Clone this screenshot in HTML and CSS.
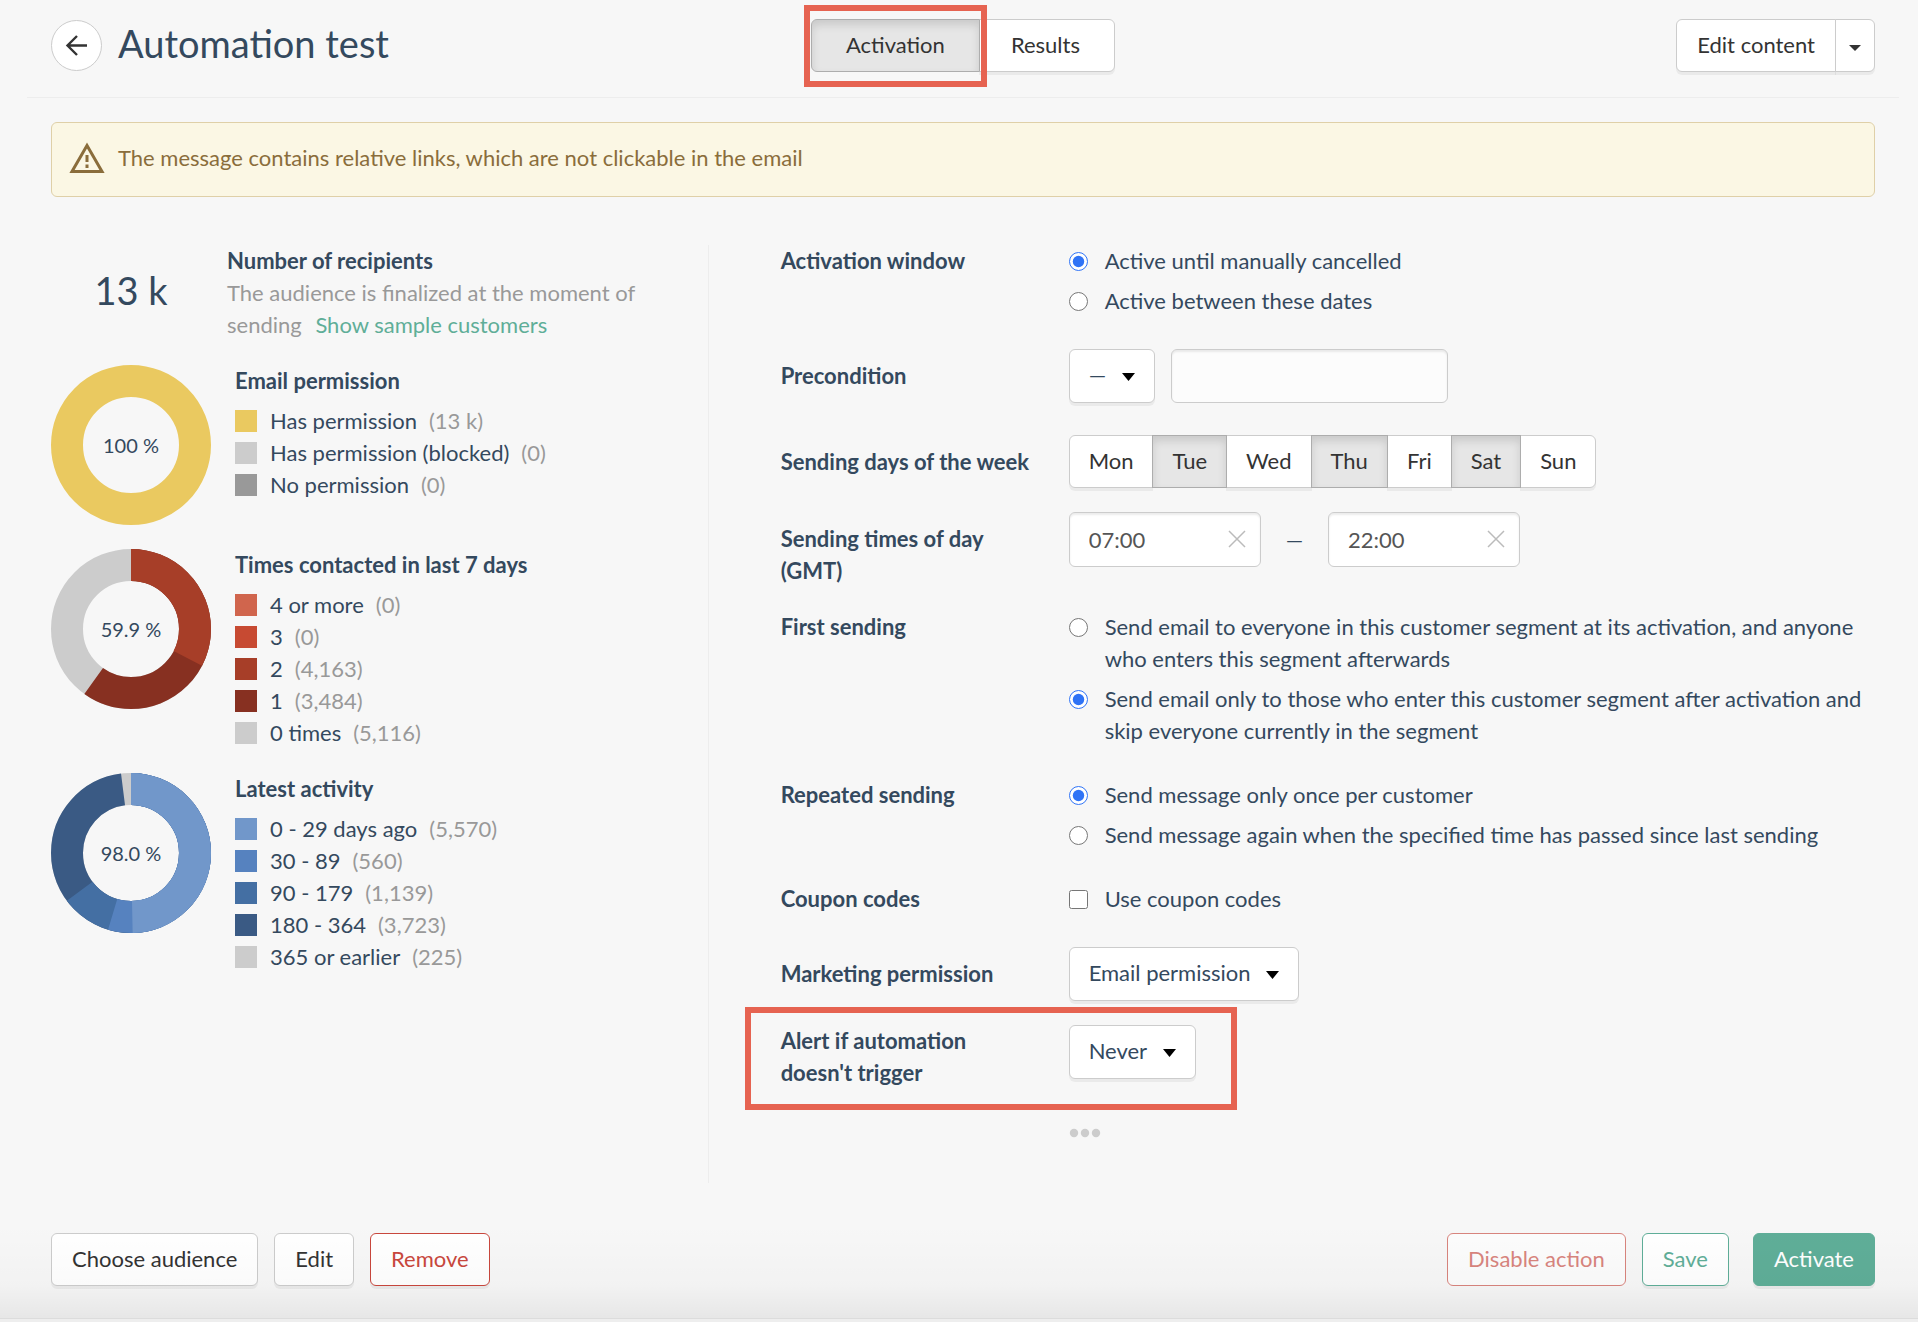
FILE: index.html
```html
<!DOCTYPE html>
<html lang="en">
<head>
<meta charset="utf-8">
<meta name="viewport" content="width=device-width, initial-scale=1">
<title>Automation test</title>
<link rel="stylesheet" href="styles.css">
</head>
<body>
<div class="page">
  <header class="header">
    <div class="header-title">
      <button class="back" type="button" aria-label="Back">
        <svg width="24" height="24" viewBox="0 0 24 24" fill="none" stroke="currentColor" stroke-width="2.4"><path d="M22 11.500H3M12 2L2.500 11.500L12 21"/></svg>
      </button>
      <h1>Automation test</h1>
    </div>
    <nav class="button-group">
      <span class="highlight-anchor"><button class="btn is-pressed tab" type="button" aria-pressed="true">Activation</button><span class="highlight highlight-tab"></span></span>
      <button class="btn tab-results" type="button">Results</button>
    </nav>
    <div class="button-group header-actions">
      <button class="btn" type="button">Edit content</button>
      <button class="btn btn-caret" type="button" aria-label="More content actions"><svg width="12" height="6" viewBox="0 0 12 6"><path d="M0 0h12L6 6z" fill="currentColor"/></svg></button>
    </div>
  </header>

  <main class="main">
    <div class="notice" role="alert">
      <svg width="36" height="32" viewBox="0 0 36 32" fill="none" stroke="currentColor"><path d="M18 3.500L33 29.500H3z" stroke-width="3"/><path d="M18 13v7M18 22.500v3.500" stroke-width="3"/></svg>
      <span>The message contains relative links, which are not clickable in the email</span>
    </div>

    <div class="columns">
      <section class="audience">
        <div class="recipients">
          <div class="recipients-count">13 k</div>
          <div class="recipients-text">
            <h2>Number of recipients</h2>
            <p>The audience is finalized at the moment of sending <a href="#">Show sample customers</a></p>
          </div>
        </div>

        <div class="stat">
          <svg class="donut" viewBox="0 0 160 160" role="img" aria-label="Email permission 100 %">
            <circle class="c-yellow" cx="80" cy="80" r="64"/>
            <text x="80" y="88">100 %</text>
          </svg>
          <div class="legend">
            <h2>Email permission</h2>
            <ul>
              <li><i class="swatch s-yellow"></i>Has permission <span>(13 k)</span></li>
              <li><i class="swatch s-light"></i>Has permission (blocked) <span>(0)</span></li>
              <li><i class="swatch s-gray"></i>No permission <span>(0)</span></li>
            </ul>
          </div>
        </div>

        <div class="stat">
          <svg class="donut" viewBox="0 0 160 160" role="img" aria-label="Contacted 59.9 %">
            <g transform="rotate(-90 80 80)">
              <circle class="c-light" cx="80" cy="80" r="64"/>
              <circle class="c-red-1" cx="80" cy="80" r="64" pathLength="100" stroke-dasharray="59.92 100"/>
              <circle class="c-red-2" cx="80" cy="80" r="64" pathLength="100" stroke-dasharray="32.62 100"/>
            </g>
            <text x="80" y="88">59.9 %</text>
          </svg>
          <div class="legend">
            <h2>Times contacted in last 7 days</h2>
            <ul>
              <li><i class="swatch s-red-4"></i>4 or more <span>(0)</span></li>
              <li><i class="swatch s-red-3"></i>3 <span>(0)</span></li>
              <li><i class="swatch s-red-2"></i>2 <span>(4,163)</span></li>
              <li><i class="swatch s-red-1"></i>1 <span>(3,484)</span></li>
              <li><i class="swatch s-light"></i>0 times <span>(5,116)</span></li>
            </ul>
          </div>
        </div>

        <div class="stat">
          <svg class="donut" viewBox="0 0 160 160" role="img" aria-label="Active 98.0 %">
            <g transform="rotate(-90 80 80)">
              <circle class="c-light" cx="80" cy="80" r="64"/>
              <circle class="c-blue-4" cx="80" cy="80" r="64" pathLength="100" stroke-dasharray="97.99 100"/>
              <circle class="c-blue-3" cx="80" cy="80" r="64" pathLength="100" stroke-dasharray="64.80 100"/>
              <circle class="c-blue-2" cx="80" cy="80" r="64" pathLength="100" stroke-dasharray="54.65 100"/>
              <circle class="c-blue-1" cx="80" cy="80" r="64" pathLength="100" stroke-dasharray="49.66 100"/>
            </g>
            <text x="80" y="88">98.0 %</text>
          </svg>
          <div class="legend">
            <h2>Latest activity</h2>
            <ul>
              <li><i class="swatch s-blue-1"></i>0 - 29 days ago <span>(5,570)</span></li>
              <li><i class="swatch s-blue-2"></i>30 - 89 <span>(560)</span></li>
              <li><i class="swatch s-blue-3"></i>90 - 179 <span>(1,139)</span></li>
              <li><i class="swatch s-blue-4"></i>180 - 364 <span>(3,723)</span></li>
              <li><i class="swatch s-light"></i>365 or earlier <span>(225)</span></li>
            </ul>
          </div>
        </div>
      </section>

      <form class="settings">
        <div class="row" role="radiogroup" aria-labelledby="l-window">
          <div class="row-label" id="l-window">Activation window</div>
          <div class="choices">
            <label class="choice"><input type="radio" name="window" checked><span>Active until manually cancelled</span></label>
            <label class="choice"><input type="radio" name="window"><span>Active between these dates</span></label>
          </div>
        </div>

        <div class="row">
          <label class="row-label for-control" for="precondition">Precondition</label>
          <div class="controls">
            <span class="select"><select id="precondition"><option>—</option></select><svg width="13" height="8" viewBox="0 0 13 8"><path d="M0 0h13L6.500 8z"/></svg></span>
            <input class="text" type="text" aria-label="Precondition value">
          </div>
        </div>

        <div class="row tight">
          <div class="row-label for-control" id="l-days">Sending days of the week</div>
          <div class="button-group days" role="group" aria-labelledby="l-days">
            <button class="btn" type="button">Mon</button>
            <button class="btn is-pressed" type="button" aria-pressed="true">Tue</button>
            <button class="btn" type="button">Wed</button>
            <button class="btn is-pressed" type="button" aria-pressed="true">Thu</button>
            <button class="btn" type="button">Fri</button>
            <button class="btn is-pressed" type="button" aria-pressed="true">Sat</button>
            <button class="btn" type="button">Sun</button>
          </div>
        </div>

        <div class="row tight">
          <label class="row-label for-control" for="time-from">Sending times of day (GMT)</label>
          <div class="controls times">
            <span class="time"><input class="text" id="time-from" type="text" value="07:00"><button class="clear" type="button" aria-label="Clear start time"><svg width="18" height="18" viewBox="0 0 18 18"><path d="M1 1l16 16M17 1L1 17"/></svg></button></span>
            <span>—</span>
            <span class="time"><input class="text" type="text" value="22:00" aria-label="End time"><button class="clear" type="button" aria-label="Clear end time"><svg width="18" height="18" viewBox="0 0 18 18"><path d="M1 1l16 16M17 1L1 17"/></svg></button></span>
          </div>
        </div>

        <div class="row" role="radiogroup" aria-labelledby="l-first">
          <div class="row-label" id="l-first">First sending</div>
          <div class="choices">
            <label class="choice"><input type="radio" name="first"><span>Send email to everyone in this customer segment at its activation, and anyone who enters this segment afterwards</span></label>
            <label class="choice"><input type="radio" name="first" checked><span>Send email only to those who enter this customer segment after activation and skip everyone currently in the segment</span></label>
          </div>
        </div>

        <div class="row" role="radiogroup" aria-labelledby="l-repeat">
          <div class="row-label" id="l-repeat">Repeated sending</div>
          <div class="choices">
            <label class="choice"><input type="radio" name="repeat" checked><span>Send message only once per customer</span></label>
            <label class="choice"><input type="radio" name="repeat"><span>Send message again when the specified time has passed since last sending</span></label>
          </div>
        </div>

        <div class="row">
          <div class="row-label">Coupon codes</div>
          <div class="choices">
            <label class="choice"><input type="checkbox"><span>Use coupon codes</span></label>
          </div>
        </div>

        <div class="row tight">
          <label class="row-label for-control" for="marketing">Marketing permission</label>
          <div class="controls">
            <span class="select"><select id="marketing"><option>Email permission</option></select><svg width="13" height="8" viewBox="0 0 13 8"><path d="M0 0h13L6.500 8z"/></svg></span>
          </div>
        </div>

        <div class="row highlight-anchor">
          <label class="row-label" for="alert">Alert if automation doesn't trigger</label>
          <div class="controls">
            <span class="select"><select id="alert"><option>Never</option></select><svg width="13" height="8" viewBox="0 0 13 8"><path d="M0 0h13L6.500 8z"/></svg></span>
          </div>
          <span class="highlight highlight-alert"></span>
        </div>

        <div class="row more-row">
          <button class="more" type="button" aria-label="More settings"><svg width="32" height="10" viewBox="0 0 32 10"><circle cx="5" cy="5" r="4.200"/><circle cx="16" cy="5" r="4.200"/><circle cx="27" cy="5" r="4.200"/></svg></button>
        </div>
      </form>
    </div>
  </main>

  <footer class="footer">
    <div class="footer-group">
      <button class="btn" type="button">Choose audience</button>
      <button class="btn" type="button">Edit</button>
      <button class="btn btn-danger" type="button">Remove</button>
    </div>
    <div class="footer-group">
      <button class="btn btn-danger" type="button" disabled>Disable action</button>
      <button class="btn btn-outline" type="button">Save</button>
      <button class="btn btn-primary" type="button">Activate</button>
    </div>
  </footer>
</div>
</body>
</html>
```
FILE: styles.css
```css
* {
  box-sizing: border-box;
}

body {
  margin: 0;
  background: #eee;
  color: #34495e;
  font: 22px/32px Lato, "Open Sans", sans-serif;
}

h1, h2, p, ul {
  margin: 0;
  padding: 0;
}

button, input, select {
  font: inherit;
  margin: 0;
}

.page {
  display: flex;
  flex-direction: column;
  background: #f7f7f7;
  border-bottom: 1px solid #dcdcdc;
}

/* Header */
.header {
  display: grid;
  grid-template-columns: 1fr auto 1fr;
  align-items: center;
  margin: 0 19px 0 27px;
  padding: 19px 24px 25px;
  border-bottom: 1px solid #ededed;
}

.header-title {
  display: flex;
  align-items: center;
  gap: 16px;
}

h1 {
  padding-bottom: 5px;
  font-size: 38px;
  font-weight: 400;
  line-height: 48px;
}

.back {
  display: grid;
  place-items: center;
  width: 51px;
  height: 51px;
  padding: 0;
  border: 1px solid #ccc;
  border-radius: 50%;
  background: #fff;
  color: #333;
}

/* Buttons */
.btn {
  height: 53px;
  padding: 0 20px 2px;
  border: 1px solid #ccc;
  border-radius: 6px;
  background: #fff;
  color: #333;
  box-shadow: 0 3px 0 rgba(0, 0, 0, 0.05);
  white-space: nowrap;
}

.btn.is-pressed {
  border-color: #adadad;
  background: #e6e6e6;
  box-shadow: inset 0 5px 8px rgba(0, 0, 0, 0.125);
}

.button-group {
  display: flex;
}

.button-group .btn {
  margin-left: -1px;
  border-radius: 0;
}

.button-group > :first-child,
.button-group > :first-child .btn {
  margin-left: 0;
  border-radius: 6px 0 0 6px;
}

.button-group > .btn:last-child {
  border-radius: 0 6px 6px 0;
}

.button-group .is-pressed {
  z-index: 1;
}

.button-group .tab {
  padding: 0 34px 2px;
}

.button-group .tab-results {
  padding: 0 34px 2px 31px;
}

.days .btn {
  padding: 0 19px 2px;
}

.header-actions {
  justify-self: end;
}

.button-group .btn-caret {
  display: grid;
  place-items: center;
  width: 40px;
  padding: 4px 0 0;
}

.btn-danger {
  border-color: #c9473d;
  color: #c9473d;
}

.btn-danger:disabled {
  opacity: 0.65;
  box-shadow: none;
}

.btn-outline {
  border-color: #5fae98;
  color: #5fae98;
}

.btn-primary {
  margin-left: 8px;
  border-color: #5fae98;
  background: #5fae98;
  color: #fff;
}

/* Red callout frames */
.highlight-anchor {
  position: relative;
}

.highlight {
  position: absolute;
  z-index: 2;
  border: 6px solid #e66351;
  pointer-events: none;
}

.highlight-tab {
  inset: -14px -7px -15px;
}

.highlight-alert {
  top: -18px;
  bottom: -21px;
  left: -36px;
  width: 492px;
}

/* Main */
.main {
  padding: 24px 43px 0 51px;
}

.notice {
  display: flex;
  align-items: center;
  gap: 13px;
  height: 75px;
  padding: 0 17px 4px;
  border: 1px solid #dfd0a8;
  border-radius: 6px;
  background: #fbf7e4;
  color: #8a6d3b;
}

.columns {
  display: grid;
  grid-template-columns: 36% 1fr;
  margin-top: 48px;
}

.audience {
  display: flex;
  flex-direction: column;
  gap: 24px;
  padding-right: 40px;
}

h2, .row-label {
  font-size: 22px;
  font-weight: 700;
  line-height: 32px;
}

.recipients {
  display: flex;
  gap: 16px;
}

.recipients-count {
  flex: none;
  width: 160px;
  padding-top: 21px;
  font-size: 38px;
  line-height: 48px;
  text-align: center;
}

.recipients-text p {
  color: #999;
}

a {
  margin-left: 8px;
  color: #5fae98;
  text-decoration: none;
}

.stat {
  display: flex;
  gap: 24px;
}

.donut {
  flex: none;
  width: 160px;
  height: 160px;
}

.donut circle {
  fill: none;
  stroke-width: 32px;
}

.donut text {
  fill: #34495e;
  font-size: 20px;
  text-anchor: middle;
}

.legend h2 {
  margin-bottom: 8px;
}

.legend li {
  display: flex;
  align-items: center;
}

.legend li span {
  margin-left: 12px;
  color: #999;
}

.swatch {
  width: 22px;
  height: 22px;
  margin-right: 13px;
}

.c-yellow { stroke: #eac960; }
.c-light { stroke: #ccc; }
.c-red-1 { stroke: #873021; }
.c-red-2 { stroke: #a73e28; }
.c-blue-1 { stroke: #7197ca; }
.c-blue-2 { stroke: #5682bf; }
.c-blue-3 { stroke: #446fa3; }
.c-blue-4 { stroke: #3a5a84; }

.s-yellow { background: #eac960; }
.s-light { background: #ccc; }
.s-gray { background: #999; }
.s-red-1 { background: #873021; }
.s-red-2 { background: #a73e28; }
.s-red-3 { background: #c74a32; }
.s-red-4 { background: #d0654d; }
.s-blue-1 { background: #7197ca; }
.s-blue-2 { background: #5682bf; }
.s-blue-3 { background: #446fa3; }
.s-blue-4 { background: #3a5a84; }

/* Settings form */
.settings {
  padding: 0 0 38px 72px;
  border-left: 1px solid #ededed;
}

.row {
  display: grid;
  grid-template-columns: 288px 1fr;
  align-items: start;
  margin-bottom: 32px;
}

.row.tight {
  margin-bottom: 24px;
}

.row-label {
  padding-right: 32px;
}

.for-control {
  padding-top: 11px;
}

.choices {
  display: flex;
  flex-direction: column;
  gap: 8px;
}

.choice {
  display: flex;
  gap: 17px;
}

.choice input {
  flex: none;
  width: 19px;
  height: 19px;
  margin-top: 7px;
  accent-color: #2f73f6;
}

.controls {
  display: flex;
  align-items: center;
  gap: 16px;
}

.select, .time {
  position: relative;
  display: flex;
}

.select select {
  height: 54px;
  padding: 0 47px 2px 19px;
  border: 1px solid #ccc;
  border-radius: 6px;
  background: #fff;
  color: #34495e;
  box-shadow: 0 3px 0 rgba(0, 0, 0, 0.05);
  appearance: none;
}

.select svg {
  position: absolute;
  top: 24px;
  right: 20px;
  fill: #000;
  pointer-events: none;
}

.text {
  width: 277px;
  height: 54px;
  padding: 0 19px;
  border: 1px solid #ccc;
  border-radius: 6px;
  background: #fcfcfc;
  color: #555;
  box-shadow: inset 0 2px 2px rgba(0, 0, 0, 0.075);
}

.times {
  gap: 25px;
}

.time .text {
  width: 192px;
  height: 55px;
  background: #fff;
}

.clear {
  position: absolute;
  top: 18px;
  right: 15px;
  display: flex;
  padding: 0;
  border: 0;
  background: none;
}

.clear svg {
  stroke: #bbb;
  stroke-width: 1.500px;
}

.more-row {
  margin-bottom: 0;
}

.more {
  grid-column: 2;
  justify-self: start;
  display: flex;
  padding: 7px 0;
  border: 0;
  background: none;
  fill: #ccc;
}

/* Footer */
.footer {
  position: relative;
  display: flex;
  justify-content: space-between;
  padding: 50px 43px 32px 51px;
}

.footer::after {
  content: "";
  position: absolute;
  inset: 0;
  background: linear-gradient(transparent 30%, rgba(0, 0, 0, 0.02) 76%, rgba(0, 0, 0, 0.065));
  pointer-events: none;
}

.footer-group {
  display: flex;
  gap: 16px;
}
```
